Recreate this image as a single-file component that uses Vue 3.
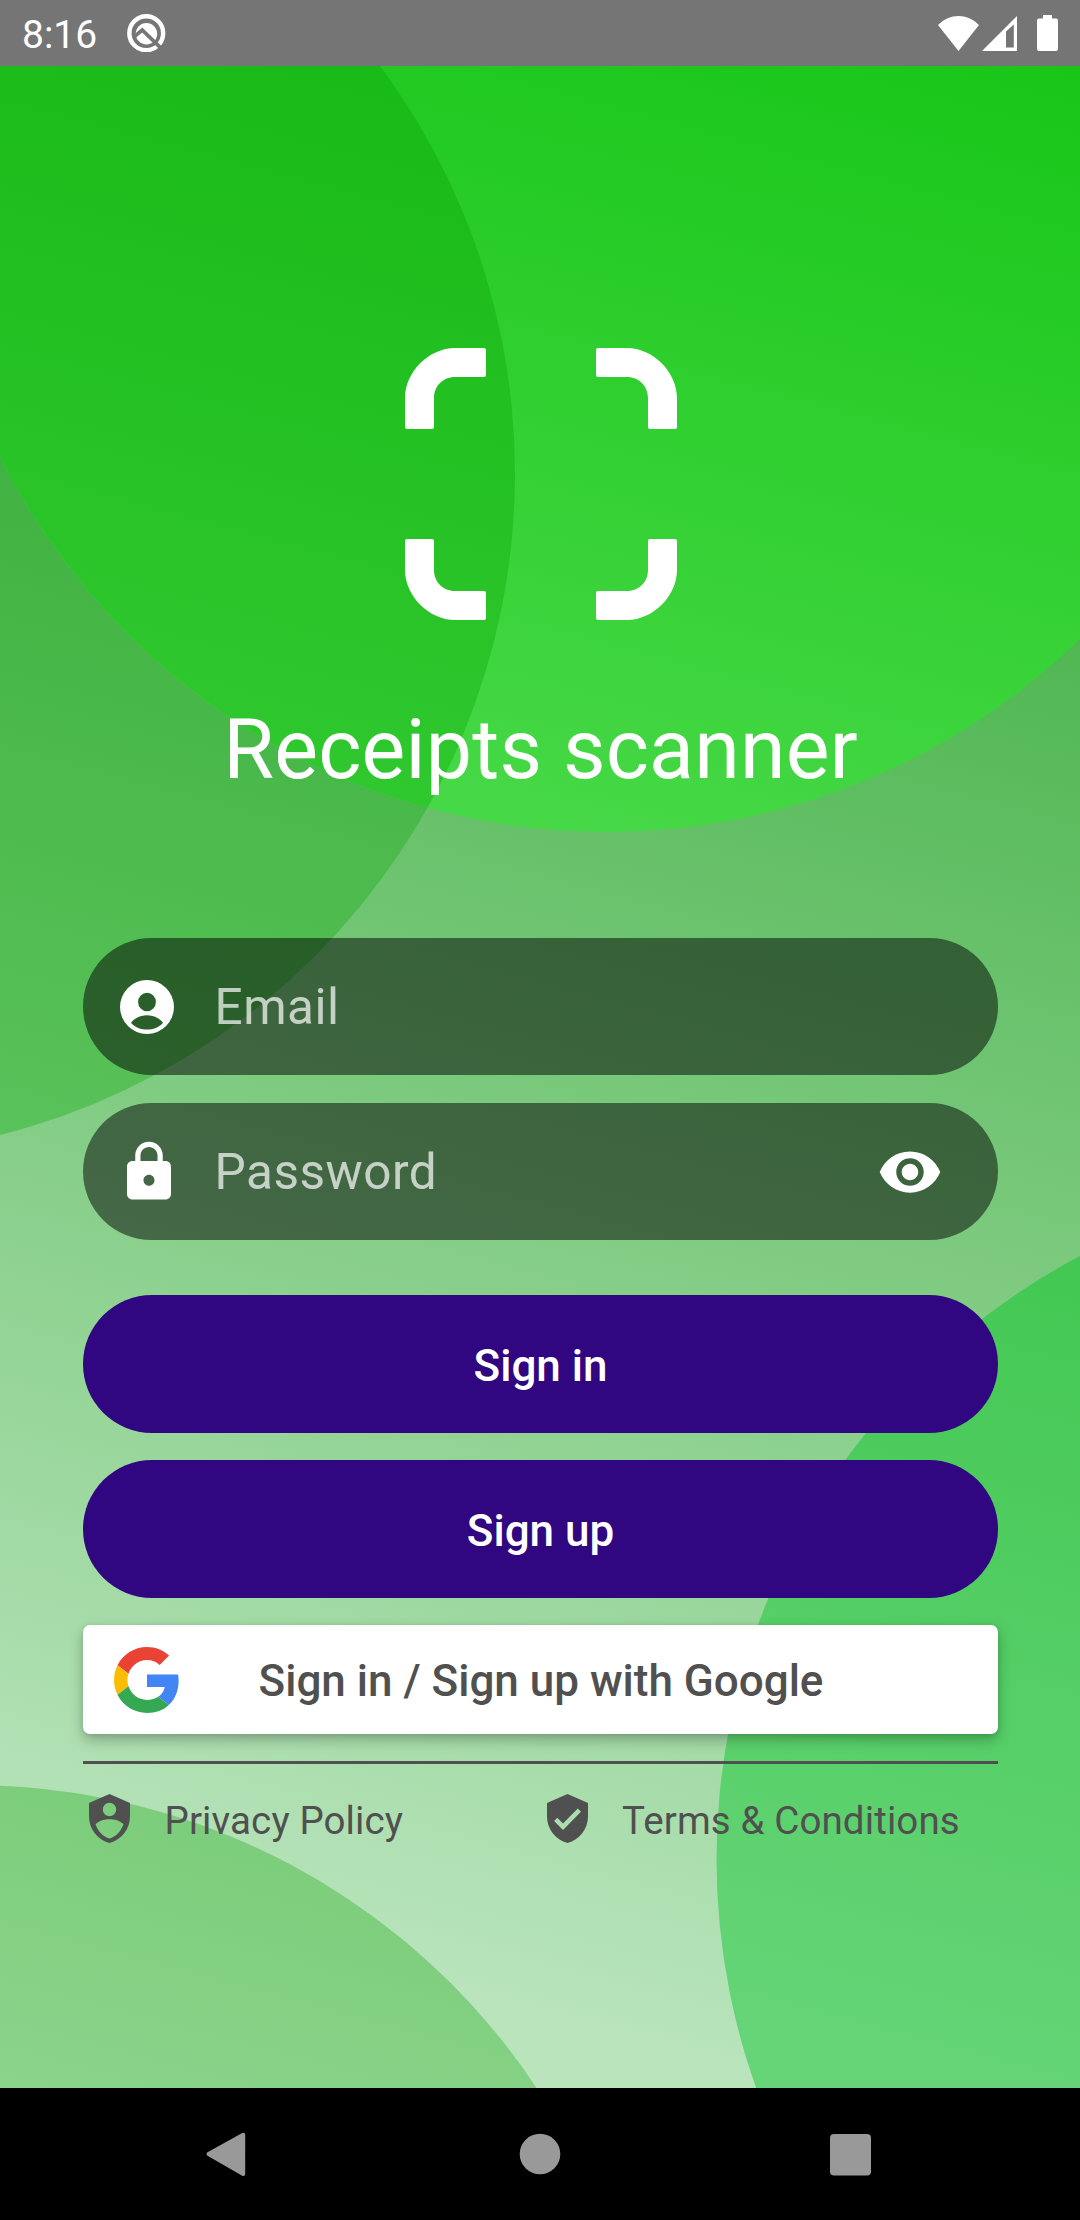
<script setup>
const fields = [
  { id: 'email', label: 'Email' },
  { id: 'password', label: 'Password' },
]
const actions = ['Sign in', 'Sign up']
</script>

<template>
  <div class="screen">
    <header class="status">
      <span class="clock">8:16</span>
      <svg class="q-icon" viewBox="0 0 38 38">
        <circle cx="19" cy="19" r="16.7" fill="none" stroke="#fff" stroke-width="4.4" />
        <circle cx="19.2" cy="19.5" r="10.6" fill="#fff" />
        <path d="M7 22.600L15 15.800L36 36.200" fill="none" stroke="#757575" stroke-width="3.600" />
      </svg>
      <span class="spacer"></span>
      <svg class="wifi" viewBox="0 0 41 35"><path d="M0 9C12-3 29-3 41 9L20.5 35Z" fill="#fff" /></svg>
      <svg class="signal" viewBox="0 0 35 35"><path fill-rule="evenodd" d="M35 0V35H0ZM24 15.5V31.5H31.8V8.6Z" fill="#fff" /></svg>
      <svg class="battery" viewBox="0 0 21 36"><path d="M6 0H15V3.5H19Q21 3.5 21 5.5V34Q21 36 19 36H2Q0 36 0 34V5.5Q0 3.5 2 3.5H6Z" fill="#fff" /></svg>
    </header>

    <main class="page">
      <svg class="backdrop" viewBox="0 66 1080 2022">
        <defs>
          <linearGradient id="base" gradientUnits="userSpaceOnUse" x1="900" y1="590" x2="520" y2="2010">
            <stop offset="0" stop-color="#50b752" />
            <stop offset="1" stop-color="#b9e4bc" />
          </linearGradient>
          <linearGradient id="left" gradientUnits="userSpaceOnUse" x1="130" y1="500" x2="-35" y2="1115">
            <stop offset="0" stop-color="#41b342" />
            <stop offset="1" stop-color="#59c25a" />
          </linearGradient>
          <linearGradient id="top" gradientUnits="userSpaceOnUse" x1="850" y1="10" x2="630" y2="830">
            <stop offset="0" stop-color="#18c618" />
            <stop offset="1" stop-color="#46d846" />
          </linearGradient>
          <linearGradient id="overlap" gradientUnits="userSpaceOnUse" x1="300" y1="66" x2="100" y2="812">
            <stop offset="0" stop-color="#19bb18" />
            <stop offset="1" stop-color="#33c932" />
          </linearGradient>
          <linearGradient id="right" gradientUnits="userSpaceOnUse" x1="1080" y1="1260" x2="860" y2="2080">
            <stop offset="0" stop-color="#43c853" />
            <stop offset="1" stop-color="#66d578" />
          </linearGradient>
          <linearGradient id="corner" gradientUnits="userSpaceOnUse" x1="90" y1="1790" x2="10" y2="2088">
            <stop offset="0" stop-color="#7ccd7b" />
            <stop offset="1" stop-color="#8ad48c" />
          </linearGradient>
          <clipPath id="leftClip"><circle cx="-167.4" cy="473.5" r="682.4" /></clipPath>
        </defs>
        <rect y="66" width="1080" height="2022" fill="url(#base)" />
        <circle cx="-167.4" cy="473.5" r="682.4" fill="url(#left)" />
        <circle cx="606.3" cy="155" r="677" fill="url(#top)" />
        <circle cx="606.3" cy="155" r="677" fill="url(#overlap)" clip-path="url(#leftClip)" />
        <circle cx="1398.3" cy="1858.9" r="681.8" fill="url(#right)" />
        <circle cx="-27.4" cy="2461.8" r="676.6" fill="url(#corner)" />
      </svg>

      <svg class="logo" viewBox="0 0 272 272">
        <defs>
          <path id="bracket" d="M0 79V50C0 24 24 0 50 0H79Q81 0 81 2V27Q81 29 79 29H50C38 29 29 38 29 50V79Q29 81 27 81H2Q0 81 0 79Z" />
        </defs>
        <g fill="#fff">
          <use href="#bracket" />
          <use href="#bracket" transform="translate(272 0) scale(-1 1)" />
          <use href="#bracket" transform="translate(0 272) scale(1 -1)" />
          <use href="#bracket" transform="translate(272 272) scale(-1 -1)" />
        </g>
      </svg>
      <h1>Receipts scanner</h1>

      <div class="form">
        <div v-for="f in fields" :key="f.id" class="field">
          <svg v-if="f.id === 'email'" class="account" viewBox="0 0 54 54">
            <path fill="#fff" fill-rule="evenodd" d="M27 0A27 27 0 1 1 27 54A27 27 0 1 1 27 0ZM27 12.7A8.9 9.3 0 1 0 27 31.3A8.9 9.3 0 1 0 27 12.7ZM11 42.7C15 47.5 21 49.6 27 49.6S39 47.5 43 42.7C39 37.5 33 35.3 27 35.3S15 37.5 11 42.7Z" />
          </svg>
          <svg v-else class="lock" viewBox="0 0 24 24">
            <path fill="#fff" d="M18 8h-1V6c0-2.760-2.240-5-5-5S7 3.240 7 6v2H6c-1.100 0-2 .9-2 2v10c0 1.100.9 2 2 2h12c1.100 0 2-.9 2-2V10c0-1.100-.9-2-2-2zm-6 9c-1.100 0-2-.9-2-2s.9-2 2-2 2 .9 2 2-.9 2-2 2zm3.100-9H8.900V6c0-1.710 1.390-3.100 3.100-3.100 1.710 0 3.100 1.390 3.100 3.100v2z" />
          </svg>
          <span class="hint">{{ f.label }}</span>
          <svg v-if="f.id === 'password'" class="eye" viewBox="0 0 24 24">
            <path fill="#fff" d="M12 4.500C7 4.500 2.730 7.610 1 12c1.730 4.390 6 7.500 11 7.500s9.270-3.110 11-7.500c-1.730-4.390-6-7.500-11-7.500zM12 17c-2.760 0-5-2.240-5-5s2.240-5 5-5 5 2.240 5 5-2.240 5-5 5zm0-8c-1.660 0-3 1.340-3 3s1.340 3 3 3 3-1.340 3-3-1.340-3-3-3z" />
          </svg>
        </div>
      </div>

      <div class="actions">
        <button v-for="a in actions" :key="a" class="pill">{{ a }}</button>
        <button class="google">
          <svg viewBox="0 0 48 48">
            <path fill="#EA4335" d="M24 9.500c3.540 0 6.710 1.220 9.210 3.600l6.850-6.850C35.900 2.380 30.470 0 24 0 14.620 0 6.510 5.380 2.560 13.220l7.980 6.190C12.430 13.720 17.740 9.500 24 9.500z" />
            <path fill="#4285F4" d="M46.980 24.550c0-1.570-.15-3.090-.38-4.550H24v9.020h12.940c-.58 2.960-2.260 5.480-4.780 7.180l7.730 6c4.510-4.180 7.090-10.360 7.090-17.650z" />
            <path fill="#FBBC05" d="M10.530 28.590c-.48-1.450-.76-2.990-.76-4.590s.27-3.140.76-4.590l-7.980-6.190C.92 16.460 0 20.120 0 24c0 3.880.92 7.540 2.560 10.780l7.970-6.190z" />
            <path fill="#34A853" d="M24 48c6.480 0 11.930-2.130 15.890-5.810l-7.730-6c-2.150 1.450-4.920 2.300-8.160 2.300-6.260 0-11.570-4.220-13.470-9.910l-7.980 6.190C6.510 42.620 14.620 48 24 48z" />
          </svg>
          <span>Sign in / Sign up with Google</span>
        </button>
      </div>

      <div class="rule"></div>
      <div class="links">
        <a>
          <svg viewBox="0 0 41 49">
            <path fill="#505050" fill-rule="evenodd" d="M20.500 0L41 9V22.500C41 35 32.500 46 20.500 49C8.500 46 0 35 0 22.500V9ZM20.500 8.800A6.700 6.700 0 1 0 20.500 22.200A6.700 6.700 0 1 0 20.500 8.800ZM6.500 30.200C9.500 38 14 42.500 20.500 44.600C27 42.500 31.500 38 34.500 30.200C31 26.500 25 25.200 20.500 25.200S10 26.500 6.500 30.200Z" />
          </svg>
          <span>Privacy Policy</span>
        </a>
        <a>
          <svg viewBox="0 0 41 49">
            <path fill="#505050" fill-rule="evenodd" d="M20.500 0L41 9V22.500C41 35 32.500 46 20.500 49C8.500 46 0 35 0 22.500V9ZM16 36L34 17.800L30.800 14.600L16 29.600L10.300 23.800L7.100 27Z" />
          </svg>
          <span>Terms &amp; Conditions</span>
        </a>
      </div>
    </main>

    <nav class="navbar">
      <svg viewBox="0 0 66 66"><path d="M13.500 33L48.200 13.800V53Z" fill="#999" stroke="#999" stroke-width="4" stroke-linejoin="round" /></svg>
      <svg viewBox="0 0 66 66"><circle cx="33" cy="33" r="20.300" fill="#999" /></svg>
      <svg viewBox="0 0 66 66"><rect x="11" y="13" width="41" height="41.500" rx="4" fill="#999" /></svg>
    </nav>
  </div>
</template>

<style>
body {
  margin: 0;
}
</style>

<style scoped>
.screen {
  width: 1080px;
  height: 2220px;
  display: flex;
  flex-direction: column;
  overflow: hidden;
  font-family: Roboto, "Liberation Sans", sans-serif;
}
svg {
  display: block;
  flex: none;
}
.status {
  height: 66px;
  flex: none;
  box-sizing: border-box;
  background: #757575;
  display: flex;
  align-items: center;
  padding: 0 22px;
  color: #fff;
}
.clock {
  font-size: 39px;
  line-height: 44px;
  padding-top: 3px;
  width: 105px;
}
.q-icon {
  width: 38.5px;
  height: 38.5px;
}
.spacer {
  flex: 1;
}
.wifi {
  width: 41px;
  height: 35px;
  margin-right: 3px;
}
.signal {
  width: 35px;
  height: 35px;
  margin-right: 20px;
}
.battery {
  width: 21px;
  height: 36px;
}
.page {
  position: relative;
  height: 2022px;
  flex: none;
  display: flex;
  flex-direction: column;
  padding: 282px 82px 0 83px;
  box-sizing: border-box;
}
.page > * {
  position: relative;
  flex: none;
}
.page > .backdrop {
  position: absolute;
  left: 0;
  top: 0;
  width: 1080px;
  height: 2022px;
}
.logo {
  width: 272px;
  height: 272px;
  align-self: center;
}
h1 {
  margin: 81px 0 0;
  height: 97px;
  line-height: 97px;
  font-size: 82.5px;
  font-weight: 400;
  letter-spacing: 0.2px;
  color: #fff;
  text-align: center;
}
.form {
  margin-top: 140px;
  display: flex;
  flex-direction: column;
  gap: 28px;
}
.field {
  height: 137px;
  box-sizing: border-box;
  border-radius: 68.5px;
  background: rgba(0, 0, 0, 0.5);
  display: flex;
  align-items: center;
  padding: 0 55px 0 33px;
}
.account {
  width: 54px;
  height: 54px;
  margin: 0 40.5px 0 4px;
}
.lock {
  width: 66px;
  height: 66px;
  margin-right: 32.5px;
}
.hint {
  flex: 1;
  font-size: 49.5px;
  letter-spacing: 0.5px;
  color: rgba(255, 255, 255, 0.7);
}
.eye {
  width: 66px;
  height: 66px;
}
.actions {
  margin-top: 55px;
  display: flex;
  flex-direction: column;
  gap: 27px;
}
button {
  border: 0;
  font: 500 44px Roboto, "Liberation Sans", sans-serif;
  display: flex;
  align-items: center;
  box-sizing: border-box;
}
.pill {
  height: 138px;
  border-radius: 69px;
  background: #300681;
  color: #fff;
  justify-content: center;
  padding: 3px 0 0;
}
.google {
  height: 109px;
  border-radius: 7px;
  background: #fff;
  color: #505050;
  padding: 0 96px 0 31px;
  box-shadow: 0 6px 14px rgba(0, 0, 0, 0.26), 0 1px 5px rgba(0, 0, 0, 0.08);
}
.google svg {
  width: 66px;
  height: 66px;
}
.google span {
  flex: 1;
  text-align: center;
  padding-top: 3px;
}
.rule {
  margin-top: 27px;
  height: 3px;
  background: #505050;
}
.links {
  margin-top: 30px;
  display: grid;
  grid-template-columns: 1fr 1fr;
  color: #505050;
}
.links a {
  display: flex;
  align-items: flex-start;
  padding-left: 6px;
}
.links svg {
  width: 41px;
  height: 49px;
}
.links span {
  font-size: 38.5px;
  line-height: 46px;
  letter-spacing: 0.12px;
  margin: 4px 0 0 34.5px;
  white-space: nowrap;
}
.navbar {
  flex: 1;
  background: #000;
  display: flex;
  justify-content: space-between;
  align-items: center;
  padding: 0 195px;
}
.navbar svg {
  width: 66px;
  height: 66px;
}
</style>
